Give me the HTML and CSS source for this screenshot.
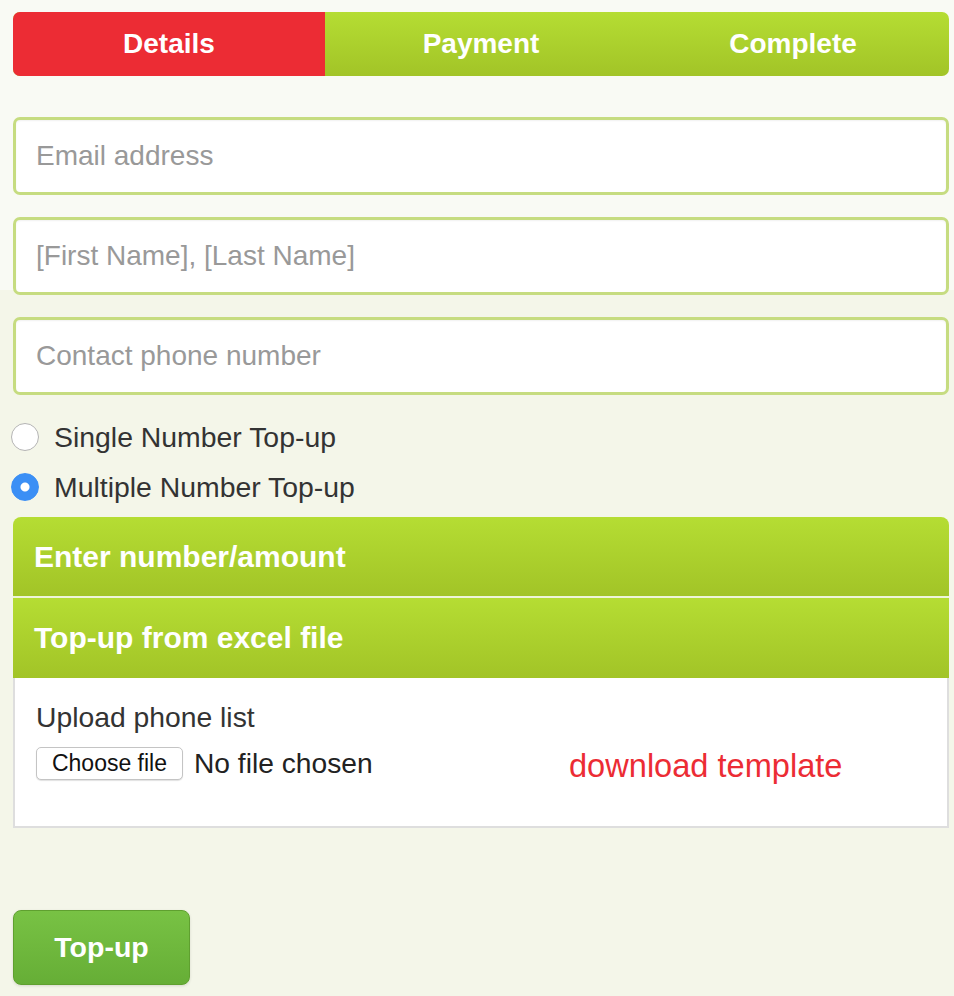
FILE: index.html
```html
<!DOCTYPE html>
<html lang="en">
  <head>
    <meta charset="UTF-8" />
    <meta name="viewport" content="width=device-width, initial-scale=1.0" />
    <title>Top-up</title>
    <link rel="stylesheet" href="styles.css">
  </head>
  <body>
    <div class="page">
      <div class="steps">
        <div class="step active">Details</div>
        <div class="step">Payment</div>
        <div class="step">Complete</div>
      </div>

      <form class="topup-form">
        <input class="field" type="email" placeholder="Email address" />
        <input class="field" type="text" placeholder="[First Name], [Last Name]" />
        <input class="field" type="tel" placeholder="Contact phone number" />

        <label class="radio-row">
          <input type="radio" name="mode" value="single" />
          <span>Single Number Top-up</span>
        </label>
        <label class="radio-row">
          <input type="radio" name="mode" value="multiple" checked />
          <span>Multiple Number Top-up</span>
        </label>

        <div class="panel">
          <div class="panel-head first">Enter number/amount</div>
          <div class="panel-head">Top-up from excel file</div>
          <div class="panel-body">
            <div class="upload-label">Upload phone list</div>
            <div class="upload-row">
              <div class="file-pick">
                <span class="file-btn">Choose file</span>
                <span class="file-name">No file chosen</span>
              </div>
              <a class="template-link" href="#">download template</a>
            </div>
          </div>
        </div>

        <button type="submit" class="topup-btn">Top-up</button>
      </form>
    </div>
  </body>
</html>
```

FILE: styles.css
```css
* {
  margin: 0;
  padding: 0;
  box-sizing: border-box;
  font-family: "Liberation Sans", Arial, Helvetica, sans-serif;
}

body {
  background: linear-gradient(#f9faf4 290px, #f4f6e9 290px);
  min-height: 100vh;
}

.page {
  padding: 12px 5px 10px 13px;
}

.steps {
  display: grid;
  grid-template-columns: repeat(3, 1fr);
  height: 64px;
  border-radius: 7px;
  overflow: hidden;
  background: linear-gradient(#b5dd33, #a2c427);
}

.step {
  display: flex;
  justify-content: center;
  align-items: center;
  color: white;
  font-size: 28px;
  font-weight: bold;
}

.step.active {
  background-color: #ec2c34;
}

.topup-form {
  padding-top: 41px;
}

.field {
  display: block;
  width: 100%;
  height: 78px;
  margin-bottom: 22px;
  padding: 0 20px;
  font-size: 28px;
  color: #333;
  background: white;
  border: 3px solid #c6dc80;
  border-radius: 7px;
  box-shadow: inset 0 1px 2px rgba(0, 0, 0, 0.06);
}

.field::placeholder {
  color: #999;
}

.radio-row {
  display: flex;
  align-items: center;
  height: 50px;
  margin-left: -2px;
  font-size: 28.4px;
  color: #333;
}

.radio-row:first-of-type {
  margin-top: -5px;
}

.radio-row input {
  appearance: none;
  width: 28px;
  height: 28px;
  margin-right: 15px;
  border: 1px solid #b4b4b4;
  border-radius: 50%;
  background: white;
}

.radio-row input:checked {
  border-color: #3b8ff5;
  background: radial-gradient(circle, white 0 4px, #3b8ff5 5px);
}

.panel {
  margin-top: 5px;
}

.panel-head {
  display: flex;
  align-items: center;
  height: 80px;
  padding-left: 21px;
  color: white;
  font-size: 30px;
  font-weight: bold;
  background: linear-gradient(#b5dd33, #a2c427);
}

.panel-head.first {
  height: 81px;
  border-radius: 8px 8px 0 0;
  border-bottom: 2px solid #eef5d8;
}

.panel-body {
  height: 150px;
  padding: 22px 21px 0;
  background: white;
  border: 2px solid #dedede;
  border-top: none;
}

.upload-label {
  font-size: 28.3px;
  line-height: 34px;
  color: #333;
}

.upload-row {
  display: grid;
  grid-template-columns: 533px auto;
  align-items: center;
  margin-top: 8px;
}

.file-pick {
  display: flex;
  align-items: center;
  gap: 11px;
}

.file-btn {
  display: inline-flex;
  align-items: center;
  justify-content: center;
  width: 147px;
  height: 33px;
  font-size: 23px;
  color: #111;
  background: white;
  border: 1px solid #c4c4c4;
  border-radius: 5px;
  box-shadow: 0 1px 1px rgba(0, 0, 0, 0.12);
}

.file-name {
  font-size: 28.2px;
  color: #222;
  margin-top: -1px;
}

.template-link {
  font-size: 32.6px;
  color: #ec2c34;
  text-decoration: none;
  margin-top: 5px;
}

.topup-btn {
  display: block;
  width: 177px;
  height: 75px;
  margin-top: 82px;
  color: white;
  font-size: 28.5px;
  font-weight: bold;
  background: linear-gradient(#78c244, #66ae36);
  border: 1px solid #5fa02f;
  border-radius: 8px;
  box-shadow: 0 1px 3px rgba(0, 0, 0, 0.12);
  cursor: pointer;
}
```
